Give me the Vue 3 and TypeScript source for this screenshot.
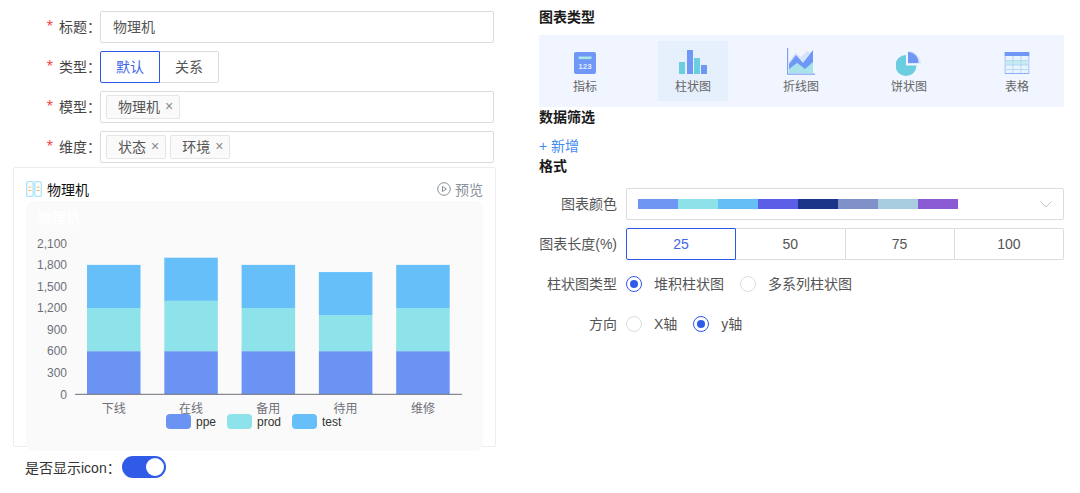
<script setup lang="ts">
interface Bar { name: string; ppe: number; prod: number; test: number }
const bars: Bar[] = [
  { name: '下线', ppe: 600, prod: 600, test: 600 },
  { name: '在线', ppe: 600, prod: 700, test: 600 },
  { name: '备用', ppe: 600, prod: 600, test: 600 },
  { name: '待用', ppe: 600, prod: 500, test: 600 },
  { name: '维修', ppe: 600, prod: 600, test: 600 },
]
const unit = 21.57 / 300
const base = 193.3
const y = (v: number) => base - v * unit
const h = (v: number) => v * unit
const barX = (i: number) => 61 + i * 77.3
const ticks = [0, 300, 600, 900, 1200, 1500, 1800, 2100]
const fmt = (n: number) => n.toLocaleString('en-US')
const colors = ['#6f96f3', '#8de2e9', '#66bef7', '#5b5fe8', '#1b3588', '#8090c9', '#a9cde0', '#8a5bd5']
const legend = [
  { x: 140, w: 25, c: '#6b93f4', t: 'ppe', tx: 170 },
  { x: 201, w: 25, c: '#8ee3ea', t: 'prod', tx: 231 },
  { x: 266, w: 25, c: '#66bff8', t: 'test', tx: 296 },
]
</script>

<template>
  <div class="page">
    <section class="left">
      <div class="row">
        <label class="lbl"><i>*</i>标题：</label>
        <div class="box input">物理机</div>
      </div>
      <div class="row">
        <label class="lbl"><i>*</i>类型：</label>
        <div class="types">
          <span class="type on">默认</span>
          <span class="type">关系</span>
        </div>
      </div>
      <div class="row">
        <label class="lbl"><i>*</i>模型：</label>
        <div class="box tags">
          <span class="tag">物理机<b>×</b></span>
        </div>
      </div>
      <div class="row">
        <label class="lbl"><i>*</i>维度：</label>
        <div class="box tags">
          <span class="tag">状态<b>×</b></span>
          <span class="tag">环境<b>×</b></span>
        </div>
      </div>

      <div class="card">
        <div class="card-head">
          <svg class="card-icon" width="16" height="16" viewBox="0 0 16 16">
            <rect x="0.7" y="0.7" width="6.4" height="14.6" rx="1.2" fill="#fff" stroke="#a9e4fb" stroke-width="1.3" />
            <rect x="8.9" y="0.7" width="6.4" height="14.6" rx="1.2" fill="#fff" stroke="#a9e4fb" stroke-width="1.3" />
            <path d="M2.4 6h3M2.4 9.5h3M10.6 6h3M10.6 9.5h3" stroke="#f9b35c" stroke-width="1" />
          </svg>
          <span class="card-title">物理机</span>
          <span class="preview">
            <svg width="14" height="14" viewBox="0 0 14 14" fill="none">
              <circle cx="7" cy="7" r="6.3" stroke="#8a909c" stroke-width="1" />
              <path d="M5.5 4.4 9.4 7 5.5 9.6Z" stroke="#8a909c" stroke-width="1" stroke-linejoin="round" />
            </svg>
            预览
          </span>
        </div>
        <div class="chart">
          <svg width="457" height="250" viewBox="0 0 457 250">
            <text x="12" y="22" class="ghost">物理机</text>
            <text
              v-for="t in ticks"
              :key="t"
              x="41"
              :y="y(t) + 4.3"
              text-anchor="end"
              class="tick"
            >{{ fmt(t) }}</text>
            <g v-for="(b, i) in bars" :key="b.name">
              <rect :x="barX(i)" :y="y(b.ppe)" width="53.5" :height="h(b.ppe)" fill="#6b93f4" />
              <rect :x="barX(i)" :y="y(b.ppe + b.prod)" width="53.5" :height="h(b.prod)" fill="#8ee3ea" />
              <rect :x="barX(i)" :y="y(b.ppe + b.prod + b.test)" width="53.5" :height="h(b.test)" fill="#66bff8" />
              <text :x="barX(i) + 26.7" y="212" text-anchor="middle" class="tick">{{ b.name }}</text>
            </g>
            <line x1="49" x2="436" :y1="base" :y2="base" stroke="#6e7079" stroke-width="1" />
            <g v-for="l in legend" :key="l.t">
              <rect :x="l.x" y="213" :width="l.w" height="15" rx="4" :fill="l.c" />
              <text :x="l.tx" y="225" class="leg">{{ l.t }}</text>
            </g>
          </svg>
        </div>
      </div>

      <div class="show">
        <span>是否显示icon：</span>
        <span class="switch"><span class="knob"></span></span>
      </div>
    </section>

    <section class="right">
      <h3 class="head">图表类型</h3>
      <div class="kinds">
        <div class="kind">
          <svg width="22" height="22" viewBox="0 0 22 22">
            <rect width="22" height="22" rx="2" fill="#6f97f5" />
            <rect x="4.5" y="4.5" width="13" height="2.6" fill="#a8e6ea" />
            <text x="11" y="17" text-anchor="middle" class="num">123</text>
          </svg>
          <span>指标</span>
        </div>
        <div class="kind sel">
          <svg width="28" height="24" viewBox="0 0 28 24">
            <rect x="0" y="12" width="6" height="12" fill="#6bcde0" />
            <rect x="8" y="0" width="6" height="24" fill="#6f97f5" />
            <rect x="15" y="8" width="6" height="16" fill="#6bcde0" />
            <rect x="22" y="15" width="6" height="9" fill="#6f97f5" />
          </svg>
          <span>柱状图</span>
        </div>
        <div class="kind line">
          <svg width="28" height="27" viewBox="0 0 28 27">
            <path d="M2 14 8 5 14 9 20 3 26 6V25H2Z" fill="#d6e4fb" />
            <path d="M2 20 9 15 17 20 26 13V25H2Z" fill="#a9e3ea" />
            <path d="M2 16 9 7 16 15 26 2V14L18 21 10 15 2 21Z" fill="#6f97f5" />
            <path d="M0.6 0V26.2H28" fill="none" stroke="#7ea3f6" stroke-width="1.2" />
          </svg>
          <span>折线图</span>
        </div>
        <div class="kind pie">
          <svg width="26" height="26" viewBox="0 0 26 26">
            <path d="M12 1A13 13 0 0 1 25 14H12Z" fill="#dfe8fc" />
            <path d="M10 5A10.5 10.5 0 1 0 20.5 15.500H10Z" fill="#6bcde0" />
            <path d="M12 2A10.5 10.5 0 0 1 22.500 13H12Z" fill="#6f97f5" />
          </svg>
          <span>饼状图</span>
        </div>
        <div class="kind">
          <svg width="25" height="22" viewBox="0 0 25 22">
            <rect x="0.5" y="0.5" width="24" height="21" fill="#e9f3fd" stroke="#8dadf7" />
            <rect width="25" height="4" fill="#6f97f5" />
            <rect x="1" y="9" width="23" height="4" fill="#c6e9f2" />
            <path d="M1 8.500H24M1 13H24M1 17.500H24M8.500 4V21M16.500 4V21" stroke="#a9d3ef" stroke-width="0.8" />
          </svg>
          <span>表格</span>
        </div>
      </div>

      <h3 class="head">数据筛选</h3>
      <a class="add">+ 新增</a>
      <h3 class="head fmt">格式</h3>

      <div class="frow">
        <label class="flbl">图表颜色</label>
        <div class="box select">
          <div class="strip">
            <span v-for="c in colors" :key="c" :style="{ background: c }"></span>
          </div>
          <svg class="chev" width="12" height="7" viewBox="0 0 12 7" fill="none">
            <path d="M0.5 0.500 6 6 11.500 0.500" stroke="#c4c6cb" stroke-width="1" />
          </svg>
        </div>
      </div>
      <div class="frow">
        <label class="flbl">图表长度(%)</label>
        <div class="segs">
          <span class="seg on">25</span>
          <span class="seg">50</span>
          <span class="seg">75</span>
          <span class="seg">100</span>
        </div>
      </div>
      <div class="frow">
        <label class="flbl">柱状图类型</label>
        <div class="radios">
          <span class="radio on"></span><span class="rtext">堆积柱状图</span>
          <span class="radio"></span><span class="rtext">多系列柱状图</span>
        </div>
      </div>
      <div class="frow">
        <label class="flbl">方向</label>
        <div class="radios">
          <span class="radio"></span><span class="rtext">X轴</span>
          <span class="radio on"></span><span class="rtext">y轴</span>
        </div>
      </div>
    </section>
  </div>
</template>

<style>
html, body { margin: 0; background: #fff; }
</style>

<style scoped>
.page {
  display: flex;
  width: 1080px;
  height: 493px;
  overflow: hidden;
  font-family: "Liberation Sans", "Noto Sans CJK SC", sans-serif;
  font-size: 14px;
  color: #555;
  box-sizing: border-box;
}
.left {
  width: 496px;
  margin-right: 43px;
  padding-top: 11px;
  flex: none;
}
.right {
  width: 525px;
  padding-top: 7px;
  flex: none;
}
.row {
  display: flex;
  height: 32px;
  margin-bottom: 8px;
  margin-right: 2px;
}
.lbl {
  width: 101px;
  margin-right: -1px;
  flex: none;
  box-sizing: border-box;
  text-align: right;
  line-height: 32px;
  color: #444;
  white-space: nowrap;
}
.lbl i {
  color: #f5484a;
  font-style: normal;
  font-size: 16px;
  margin-right: 6px;
  font-family: "Liberation Sans", sans-serif;
}
.box {
  flex: 1;
  border: 1px solid #dcdcdc;
  border-radius: 2px;
  box-sizing: border-box;
  background: #fff;
}
.input {
  padding-left: 12px;
  line-height: 30px;
  color: #555;
}
.types { display: flex; }
.type {
  width: 59px;
  height: 32px;
  box-sizing: border-box;
  border: 1px solid #dcdcdc;
  border-left: 0;
  border-radius: 0 2px 2px 0;
  text-align: center;
  line-height: 30px;
  color: #555;
}
.type.on {
  width: 60px;
  border: 1px solid #3058e6;
  border-radius: 2px 0 0 2px;
  color: #3f66e8;
}
.tags {
  display: flex;
  align-items: center;
  gap: 4px;
  padding-left: 5px;
}
.tag {
  display: flex;
  align-items: center;
  height: 24px;
  box-sizing: border-box;
  padding: 0 6px 2px 11px;
  border: 1px solid #e6e6e6;
  border-radius: 2px;
  background: #fafafa;
  color: #555;
}
.tag b {
  font-weight: 400;
  color: #888;
  font-size: 14px;
  margin-left: 5px;
}
.card {
  height: 280px;
  margin-top: -4px;
  margin-left: 13px;
  padding: 0 12px;
  box-sizing: border-box;
  border: 1px solid #ececf2;
  border-radius: 2px;
}
.card-head {
  display: flex;
  align-items: center;
  height: 33px;
  padding-top: 9px;
  box-sizing: border-box;
}
.card-icon { flex: none; margin-right: 5px; }
.card-title { color: #111; }
.preview {
  margin-left: auto;
  display: flex;
  align-items: center;
  gap: 4px;
  color: #8a909c;
}
.chart {
  width: 457px;
  height: 250px;
  background: #fafafa;
  border-radius: 8px;
}
.chart svg { display: block; }
.ghost { fill: #fff; font-size: 14px; font-weight: 700; }
.tick { fill: #6e7079; font-size: 12px; }
.leg { fill: #333; font-size: 12px; }
.show {
  display: flex;
  align-items: center;
  height: 22px;
  margin-top: 9px;
  margin-left: 25px;
  color: #333;
}
.switch {
  display: flex;
  align-items: center;
  justify-content: flex-end;
  width: 44px;
  height: 22px;
  padding: 0 2px;
  box-sizing: border-box;
  margin-left: 1px;
  border-radius: 11px;
  background: #2f5be7;
}
.knob {
  width: 18px;
  height: 18px;
  border-radius: 50%;
  background: #fff;
}
.head {
  margin: 0 0 6px;
  font-size: 14px;
  line-height: 20px;
  padding-bottom: 2px;
  font-weight: 700;
  color: #1a1a1a;
}
.kinds {
  display: flex;
  gap: 38px;
  height: 72px;
  padding: 6px 12px 6px 11px;
  box-sizing: border-box;
  background: #f0f5ff;
}
.kind {
  width: 70px;
  height: 60px;
  flex: none;
  position: relative;
  display: flex;
  flex-direction: column;
  align-items: center;
  justify-content: flex-end;
  padding-bottom: 4px;
  box-sizing: border-box;
  font-size: 12px;
  line-height: 20px;
  color: #666;
}
.kind svg {
  position: absolute;
  bottom: 27px;
  left: 50%;
  transform: translateX(-50%);
}
.kind.line svg { bottom: 26px; }
.kind.pie svg { bottom: 25px; }
.kind.sel { background: #e6f0fd; }
.num { fill: #dfeaff; font-size: 8px; font-weight: 700; }
.add {
  display: block;
  height: 21px;
  line-height: 23px;
  color: #3f8cf3;
}
.fmt { margin-bottom: 10px; }
.frow {
  display: flex;
  align-items: center;
  height: 32px;
  margin-bottom: 8px;
}
.flbl {
  width: 87px;
  flex: none;
  box-sizing: border-box;
  padding: 0 9px 2px 0;
  text-align: right;
  white-space: nowrap;
  color: #555;
}
.select {
  height: 32px;
  display: flex;
  align-items: center;
  padding: 0 11px 0 11px;
}
.strip { display: flex; height: 10px; }
.strip span { width: 40px; }
.chev { margin-left: auto; }
.segs { display: flex; flex: 1; height: 32px; }
.seg {
  flex: 1;
  box-sizing: border-box;
  border: 1px solid #dcdcdc;
  border-left: 0;
  text-align: center;
  line-height: 30px;
  color: #555;
}
.seg.on {
  border: 1px solid #3058e6;
  color: #3f66e8;
  border-radius: 2px 0 0 2px;
}
.seg:last-child { border-radius: 0 2px 2px 0; }
.radios { display: flex; align-items: center; }
.radio {
  width: 16px;
  height: 16px;
  box-sizing: border-box;
  border: 1px solid #dcdcdc;
  border-radius: 50%;
  margin-right: 6px;
  position: relative;
  flex: none;
  background: #fff;
}
.radio.on { border-color: #3058e6; }
.radio.on::after {
  content: "";
  position: absolute;
  left: 3px;
  top: 3px;
  width: 8px;
  height: 8px;
  border-radius: 50%;
  background: #2f5be7;
}
.rtext { margin-left: 6px; margin-right: 16px; padding-bottom: 2px; color: #555; }
</style>
